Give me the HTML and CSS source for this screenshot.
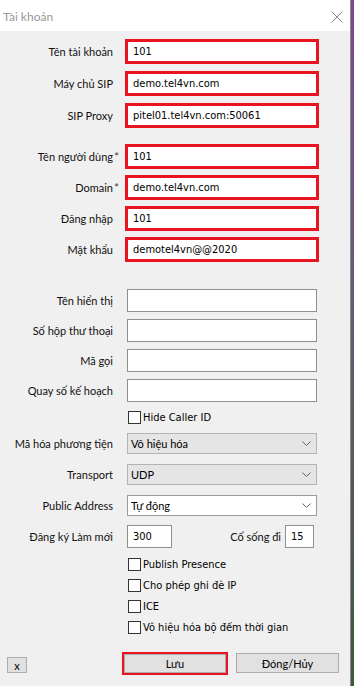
FILE: index.html
```html
<!DOCTYPE html>
<html lang="vi">
<head>
<meta charset="utf-8">
<title>Tài khoản</title>
<link rel="stylesheet" href="styles.css">
</head>
<body>
<div class="window">
  <div class="titlebar">
    <span class="title">Tài khoản</span>
    <svg class="close" width="12" height="12" viewBox="0 0 12 12"><path d="M0.5 0.5 L11.5 11.5 M11.5 0.5 L0.5 11.5" stroke="#8a8a8a" stroke-width="1" fill="none"/></svg>
  </div>
  <div class="content">
    <div class="group g1">
      <div class="row rh"><span class="lbl">Tên tài khoản</span><div class="field hl">101</div></div>
      <div class="row rh"><span class="lbl">Máy chủ SIP</span><div class="field hl">demo.tel4vn.com</div></div>
      <div class="row rh"><span class="lbl">SIP Proxy</span><div class="field hl">pitel01.tel4vn.com:50061</div></div>
    </div>
    <div class="group g2">
      <div class="row rh"><span class="lbl">Tên người dùng<span class="req">*</span></span><div class="field hl">101</div></div>
      <div class="row rh"><span class="lbl">Domain<span class="req">*</span></span><div class="field hl">demo.tel4vn.com</div></div>
      <div class="row rh"><span class="lbl">Đăng nhập</span><div class="field hl">101</div></div>
      <div class="row rh"><span class="lbl">Mật khẩu</span><div class="field hl">demotel4vn@@2020</div></div>
    </div>
    <div class="group g3">
      <div class="row rt"><span class="lbl">Tên hiển thị</span><div class="field tb"></div></div>
      <div class="row rt"><span class="lbl">Số hộp thư thoại</span><div class="field tb"></div></div>
      <div class="row rt"><span class="lbl">Mã gọi</span><div class="field tb"></div></div>
      <div class="row rt"><span class="lbl">Quay số kế hoạch</span><div class="field tb"></div></div>
    </div>
    <div class="group g4">
      <div class="check"><span class="box"></span><span class="ctext">Hide Caller ID</span></div>
    </div>
    <div class="group g5">
      <div class="row rs"><span class="lbl">Mã hóa phương tiện</span><div class="select grey"><span>Vô hiệu hóa</span><svg class="chev" width="9" height="5" viewBox="0 0 9 5"><path d="M0.5 0.5 L4.5 4.5 L8.5 0.5" stroke="#606060" fill="none"/></svg></div></div>
      <div class="row rs"><span class="lbl">Transport</span><div class="select grey"><span>UDP</span><svg class="chev" width="9" height="5" viewBox="0 0 9 5"><path d="M0.5 0.5 L4.5 4.5 L8.5 0.5" stroke="#606060" fill="none"/></svg></div></div>
      <div class="row rs"><span class="lbl">Public Address</span><div class="select white"><span>Tự động</span><svg class="chev" width="9" height="5" viewBox="0 0 9 5"><path d="M0.5 0.5 L4.5 4.5 L8.5 0.5" stroke="#606060" fill="none"/></svg></div></div>
    </div>
    <div class="group g6">
      <div class="row rt"><span class="lbl">Đăng ký Làm mới</span><div class="field tb small">300</div><span class="lbl2">Cố sống đi</span><div class="field tb tiny">15</div></div>
    </div>
    <div class="group g7">
      <div class="check"><span class="box"></span><span class="ctext">Publish Presence</span></div>
      <div class="check"><span class="box"></span><span class="ctext">Cho phép ghi đè IP</span></div>
      <div class="check"><span class="box"></span><span class="ctext">ICE</span></div>
      <div class="check"><span class="box"></span><span class="ctext">Vô hiệu hóa bộ đếm thời gian</span></div>
    </div>
    <div class="buttons">
      <div class="btn xbtn">x</div>
      <div class="savewrap"><div class="btn save">Lưu</div></div>
      <div class="btn cancel">Đóng/Hủy</div>
    </div>
  </div>
</div>
<div class="desk"></div>
</body>
</html>
```

FILE: styles.css
```css
html, body {
  margin: 0;
  padding: 0;
}
body {
  width: 354px;
  height: 686px;
  display: flex;
  overflow: hidden;
  font-family: Lato, "Noto Sans", sans-serif;
  font-size: 11px;
  color: #000;
}
.window {
  width: 350px;
  height: 686px;
  border-right: 1px solid #8c8c8c;
  display: flex;
  flex-direction: column;
  background: #f0f0f0;
}
.desk {
  flex: 1;
  background: linear-gradient(180deg, #7b4a8c 0%, #6b5a7a 40%, #3d5a3a 100%);
}
.titlebar {
  height: 31px;
  background: #fff;
  display: flex;
  align-items: center;
  justify-content: space-between;
  padding: 0 7px 0 3px;
  flex: none;
}
.title {
  color: #999;
  font-size: 12px;
  margin-top: 2px;
}
.close {
  display: block;
  margin-top: 3px;
}
.content {
  flex: 1;
  display: flex;
  flex-direction: column;
}
.group {
  display: flex;
  flex-direction: column;
}
.g1 { margin-top: 8px; gap: 7px; }
.g2 { margin-top: 16px; gap: 6px; }
.g3 { margin-top: 27px; gap: 7px; }
.g4 { margin-top: 9px; }
.g5 { margin-top: 9px; gap: 10px; }
.g6 { margin-top: 9px; }
.g7 { margin-top: 10px; gap: 8px; }
.row {
  display: flex;
  align-items: center;
}
.rh { height: 25px; }
.rt { height: 23px; }
.rs { height: 21px; }
.lbl {
  width: 113px;
  flex: none;
  text-align: right;
  margin-right: 12px;
  white-space: nowrap;
  color: #111;
}
.req {
  display: inline-block;
  width: 7px;
  margin-right: -7px;
  padding-left: 1px;
  box-sizing: border-box;
  text-align: left;
  color: #444;
  font-size: 12px;
}
.field {
  box-sizing: border-box;
  background: #fff;
  font-family: "DejaVu Sans", sans-serif;
  font-stretch: condensed;
  font-size: 11px;
  display: flex;
  align-items: center;
  white-space: nowrap;
}
.hl {
  width: 194px;
  height: 25px;
  border: 3px solid #e8141f;
  padding-left: 5px;
}
.tb {
  width: 190px;
  height: 23px;
  border: 1px solid #8f8f8f;
  margin-left: 2px;
  padding-left: 5px;
}
.tb.small { width: 45px; }
.tb.tiny { width: 29px; margin-left: 4px; }
.lbl2 {
  width: 109px;
  text-align: right;
  white-space: nowrap;
  color: #111;
}
.select {
  box-sizing: border-box;
  width: 190px;
  height: 21px;
  margin-left: 2px;
  display: flex;
  align-items: center;
  justify-content: space-between;
  padding: 0 5px 0 3px;
}
.select.grey {
  background: #e5e5e5;
  border: 1px solid #b3b3b3;
}
.select.white {
  background: #fff;
  border: 1px solid #9c9c9c;
}
.chev { display: block; }
.check {
  height: 13px;
  display: flex;
  align-items: center;
  margin-left: 128px;
}
.box {
  box-sizing: border-box;
  width: 13px;
  height: 13px;
  background: #fff;
  border: 1px solid #333;
  flex: none;
}
.ctext {
  margin-left: 2px;
  font-family: "DejaVu Sans", sans-serif;
  font-stretch: condensed;
  font-size: 11px;
  white-space: nowrap;
}
.buttons {
  margin-top: 18px;
  display: flex;
  align-items: flex-start;
  padding-left: 7px;
}
.btn {
  box-sizing: border-box;
  background: #e1e1e1;
  border: 1px solid #adadad;
  display: flex;
  align-items: center;
  justify-content: center;
}
.xbtn {
  width: 20px;
  height: 16px;
  margin-top: 5px;
}
.savewrap {
  box-sizing: border-box;
  width: 106px;
  height: 23px;
  margin-left: 95px;
  border: 2px solid #e8141f;
  display: flex;
}
.save {
  flex: 1;
}
.cancel {
  width: 103px;
  height: 20px;
  margin-left: 8px;
  margin-top: 1px;
}
```
